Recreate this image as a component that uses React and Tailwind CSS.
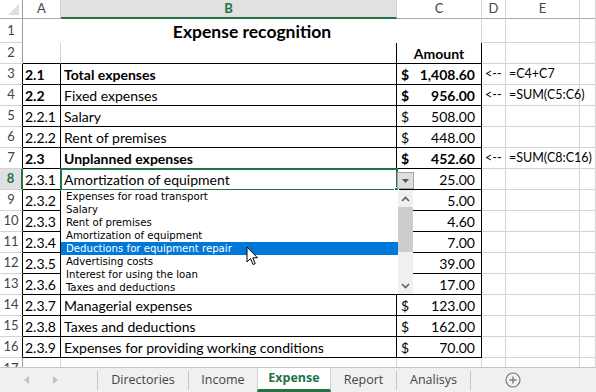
import clsx from 'clsx'

const CELL_FONT = { fontFamily: 'Lato, "Liberation Sans", sans-serif' }

const ROWS = [
    { n: 3, a: '2.1', b: 'Total expenses', amt: '1,408.60', bold: true, boldB: true, d: '<--', e: '=C4+C7' },
    { n: 4, a: '2.2', b: 'Fixed expenses', amt: '956.00', bold: true, d: '<--', e: '=SUM(C5:C6)' },
    { n: 5, a: '2.2.1', b: 'Salary', amt: '508.00' },
    { n: 6, a: '2.2.2', b: 'Rent of premises', amt: '448.00' },
    { n: 7, a: '2.3', b: 'Unplanned expenses', amt: '452.60', bold: true, boldB: true, d: '<--', e: '=SUM(C8:C16)' },
    { n: 8, a: '2.3.1', b: 'Amortization of equipment', amt: '25.00' },
    { n: 9, a: '2.3.2', b: '', amt: '5.00' },
    { n: 10, a: '2.3.3', b: '', amt: '4.60' },
    { n: 11, a: '2.3.4', b: '', amt: '7.00' },
    { n: 12, a: '2.3.5', b: '', amt: '39.00' },
    { n: 13, a: '2.3.6', b: '', amt: '17.00' },
    { n: 14, a: '2.3.7', b: 'Managerial expenses', amt: '123.00' },
    { n: 15, a: '2.3.8', b: 'Taxes and deductions', amt: '162.00' },
    { n: 16, a: '2.3.9', b: 'Expenses for providing working conditions', amt: '70.00' },
]

const LIST = [
    'Expenses for road transport',
    'Salary',
    'Rent of premises',
    'Amortization of equipment',
    'Deductions for equipment repair',
    'Advertising costs',
    'Interest for using the loan',
    'Taxes and deductions',
]

const COLS = ['A', 'B', 'C', 'D', 'E', '']

function RowHead({ n }) {
    const sel = n === 8
    const dark = n >= 3 && n <= 16
    return (
        <div
            className={clsx(
                'flex items-center justify-center border-b border-b-[#d4d4d4] text-[13px]',
                sel ? 'bg-[#e1e1e1] text-[#217346] font-bold border-r-2 border-r-[#217346]' : 'bg-white text-[#444] border-r',
                !sel && (dark ? 'border-r-black' : 'border-r-[#9b9b9b]')
            )}
        >
            {n}
        </div>
    )
}

function Cell({ black, blackB, small, className, children }) {
    return (
        <div
            className={clsx(
                'flex items-center whitespace-nowrap border-r border-b text-black',
                small ? 'text-[12.5px]' : 'text-[14px]',
                black ? 'border-r-black' : 'border-r-[#d4d4d4]',
                blackB ? 'border-b-black' : 'border-b-[#d4d4d4]',
                className
            )}
        >
            {children}
        </div>
    )
}

function Chevron({ up }) {
    return (
        <svg width="9" height="6" viewBox="0 0 9 6">
            <polyline
                points={up ? '1,5 4.5,1.5 8,5' : '1,1 4.5,4.5 8,1'}
                fill="none"
                stroke="#606060"
                strokeWidth="1.6"
            />
        </svg>
    )
}

export default function App() {
    return (
        <div className="relative w-[596px] h-[392px] overflow-hidden bg-white" style={CELL_FONT}>
            <div className="grid grid-cols-[23px_38px_336px_85px_24px_74px_1fr] grid-rows-[19px_24px_repeat(15,21px)_9px]">
                {/* column headers */}
                <div className="flex items-end justify-end pr-[3px] pb-[3px] bg-white border-r border-r-[#9b9b9b] border-b border-b-[#ababab]">
                    <svg width="11" height="11" viewBox="0 0 11 11"><polygon points="0,11 11,11 11,0" fill="#dfdfdf" /></svg>
                </div>
                {COLS.map((c, i) => (
                    <div
                        key={i}
                        className={clsx(
                            'flex items-center justify-center text-[13px] border-r border-r-[#d4d4d4]',
                            c === 'B' ? 'bg-[#e1e1e1] text-[#217346] font-bold border-b-2 border-b-[#217346]' : 'bg-white text-[#444] border-b border-b-[#ababab]'
                        )}
                    >
                        {c}
                    </div>
                ))}

                {/* row 1 - merged title */}
                <RowHead n={1} />
                <div className="col-span-3 flex flex-col border-r border-r-[#d4d4d4]">
                    <div className="flex-1 flex items-center justify-center text-[17.5px] font-bold text-black">Expense recognition</div>
                    <div className="flex h-px">
                        <div className="w-[374px] bg-[#d4d4d4]" />
                        <div className="flex-1 bg-black" />
                    </div>
                </div>
                <Cell />
                <Cell />
                <Cell />

                {/* row 2 */}
                <RowHead n={2} />
                <Cell blackB />
                <Cell black blackB />
                <Cell black blackB className="justify-center font-bold">Amount</Cell>
                <Cell />
                <Cell />
                <Cell />

                {ROWS.map((r) => (
                    <div key={r.n} className="contents">
                        <RowHead n={r.n} />
                        <Cell black blackB className={clsx('pl-[2px]', r.bold && 'font-bold')}>{r.a}</Cell>
                        <Cell black blackB className={clsx('pl-[3px]', r.boldB && 'font-bold')}>{r.b}</Cell>
                        <Cell black blackB className={clsx('justify-between pl-[4px] pr-[6px]', r.bold && 'font-bold')}>
                            <span>$</span>
                            <span>{r.amt}</span>
                        </Cell>
                        <Cell small className="pl-[3px]">{r.d}</Cell>
                        <Cell small className="pl-[3px] relative z-10">{r.e}</Cell>
                        <Cell />
                    </div>
                ))}

                {/* row 17, cut off by the sheet tabs */}
                <div className="overflow-hidden bg-white border-r border-r-[#9b9b9b]">
                    <div className="h-[21px] flex items-center justify-center text-[13px] text-[#444]">17</div>
                </div>
                {COLS.map((c, i) => (
                    <div key={i} className="border-r border-r-[#d4d4d4]" />
                ))}
            </div>

            {/* sheet tabs */}
            <div className="flex h-[25px] items-center bg-[#f0f0f0] border-t border-t-[#c6c6c6] text-[12.5px] text-[#444]" style={{ fontFamily: '"Open Sans", "Liberation Sans", sans-serif' }}>
                <div className="w-[97px] flex items-center">
                    <svg className="ml-[24px]" width="5" height="8" viewBox="0 0 5 8"><polygon points="5,0 5,8 0,4" fill="#c0c0c0" /></svg>
                    <svg className="ml-[24px]" width="5" height="8" viewBox="0 0 5 8"><polygon points="0,0 0,8 5,4" fill="#c0c0c0" /></svg>
                </div>
                <div className="w-px h-[19px] bg-[#c6c6c6]" />
                <div className="w-[90px] text-center">Directories</div>
                <div className="w-px h-[19px] bg-[#c6c6c6]" />
                <div className="w-[68px] text-center">Income</div>
                <div className="w-[74px] self-stretch flex items-center justify-center bg-white border-x border-x-[#d0d0d0] border-b-[3px] border-b-[#217346] text-[#217346] font-bold">Expense</div>
                <div className="w-[65px] text-center">Report</div>
                <div className="w-px h-[19px] bg-[#c6c6c6]" />
                <div className="w-[73px] text-center">Analisys</div>
                <div className="w-px h-[19px] bg-[#c6c6c6]" />
                <svg className="ml-[34px]" width="16" height="16" viewBox="0 0 16 16">
                    <circle cx="8" cy="8" r="7" fill="none" stroke="#7a7a7a" strokeWidth="1.2" />
                    <path d="M8 4.5v7M4.5 8h7" stroke="#7a7a7a" strokeWidth="1.4" />
                </svg>
            </div>

            {/* selected cell B8 */}
            <div className="absolute left-[60px] top-[168px] w-[338px] h-[23px] border-2 border-[#217346]" />
            <div className="absolute left-[394px] top-[187px] w-[5px] h-[5px] bg-[#217346] border border-white" />

            {/* data validation button */}
            <div className="absolute left-[397px] top-[172px] w-[17px] h-[17px] flex items-center justify-center bg-[#dedede] border border-[#a6a6a6]">
                <svg width="7" height="4" viewBox="0 0 7 4"><polygon points="0,0 7,0 3.5,4" fill="#555" /></svg>
            </div>

            {/* dropdown list */}
            <div className="absolute left-[61px] top-[190px] w-[352px] h-[104px] flex bg-white">
                <div className="flex-1 flex flex-col" style={{ fontFamily: '"DejaVu Sans Condensed", "Liberation Sans", sans-serif' }}>
                    {LIST.map((item, i) => (
                        <div
                            key={item}
                            className={clsx('h-[13px] leading-[13px] pl-[5px] text-[11.3px] whitespace-nowrap', i === 4 ? 'bg-[#0078d7] text-white' : 'text-black')}
                        >
                            {item}
                        </div>
                    ))}
                </div>
                <div className="w-[15px] flex flex-col items-center bg-[#f0f0f0]">
                    <div className="h-[17px] flex items-center justify-center"><Chevron up /></div>
                    <div className="h-[45px] w-full bg-[#cdcdcd]" />
                    <div className="flex-1" />
                    <div className="h-[17px] flex items-center justify-center"><Chevron /></div>
                </div>
            </div>

            {/* mouse pointer */}
            <svg className="absolute left-[246px] top-[246px]" width="13" height="21" viewBox="0 0 13 21">
                <path d="M1 1 L1 16 L4.5 12.5 L7 18.5 L9.2 17.6 L6.8 11.8 L11.5 11.8 Z" fill="white" stroke="black" strokeWidth="1" strokeLinejoin="round" />
            </svg>
        </div>
    )
}
